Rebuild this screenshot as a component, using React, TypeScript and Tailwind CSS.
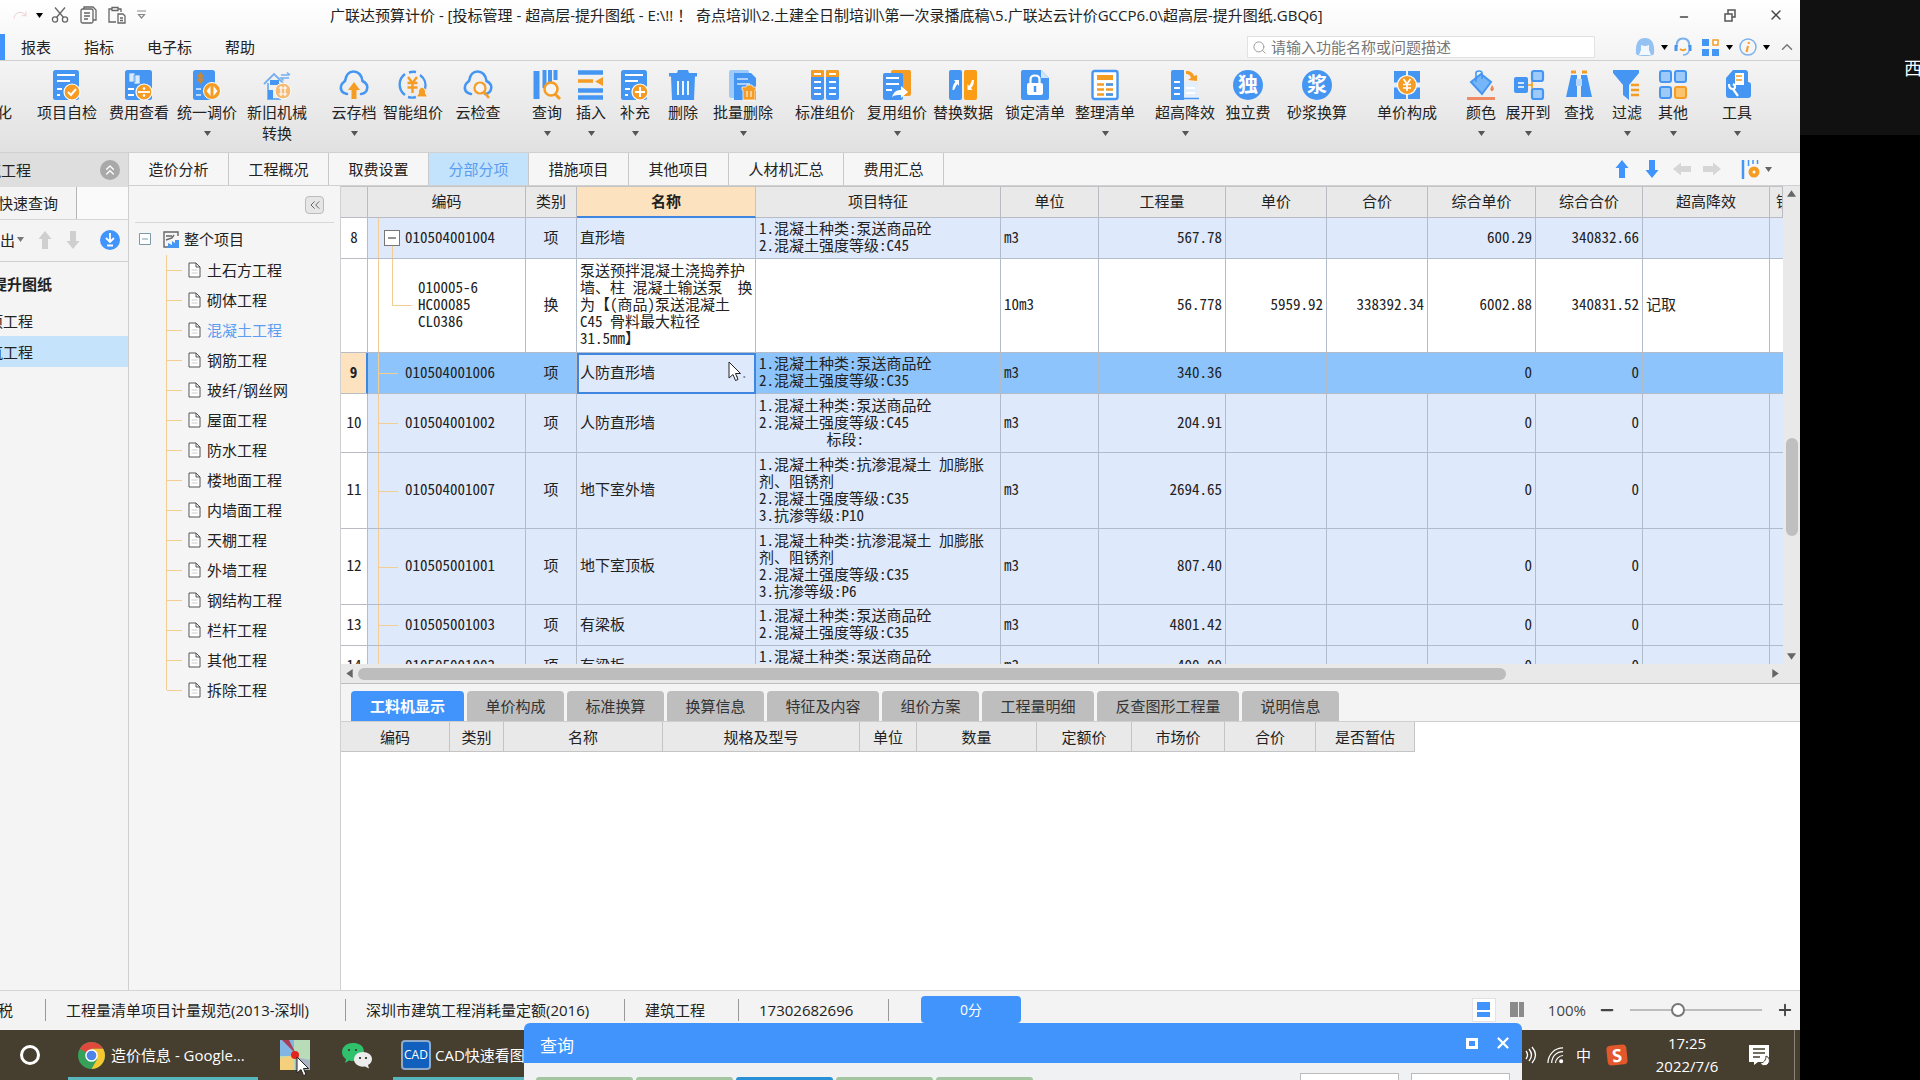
import React from 'react';
import {
  Redo,
  Search,
  ChevronUp,
  ChevronsUp,
  ChevronsLeft,
  X,
  Minus,
  Plus,
} from 'lucide-react';

const BLUE = '#4596f3';
const LIGHT = '#9ccbfa';
const ORANGE = '#f59c24';

type IconMap = Record<string, React.ReactNode>;

const badge = <circle cx="19" cy="22" r="8" fill={ORANGE} stroke="#fff" strokeWidth="1.2" />;
const doc = (
  <>
    <rect x="0" y="0" width="26" height="30" rx="2.5" fill={BLUE} />
    <path d="M4 5h18M4 11h13M4 19h5M4 25h3" stroke="#fff" strokeWidth="1.8" />
  </>
);
const cloud = (
  <path
    d="M7 24C2 23 0 20 1 16c.6-3 3-4 4-5C6 5 9 1.500 13.500 1.500S22 5 22.500 11c3 1.500 5 3 4.800 6.500C27 21 25 23.500 21 24"
    fill="none"
    stroke={BLUE}
    strokeWidth="2.600"
    strokeLinecap="round"
  />
);

const icons: IconMap = {
  check: (
    <>
      {doc}
      {badge}
      <path d="M15 22l3 3 5-6" fill="none" stroke="#fff" strokeWidth="2" />
    </>
  ),
  fee: (
    <>
      <rect width="27" height="30" rx="2.5" fill={BLUE} />
      <path d="M4 3h6v9H4zM9 5h6v9H9z" fill="#d8ebff" stroke={BLUE} strokeWidth=".7" />
      <path d="M3 19h6M3 25h6" stroke="#fff" strokeWidth="2" />
      {badge}
      <path d="M13 22h12" stroke="#fff" strokeWidth="1.8" />
      <circle cx="19" cy="18.500" r="1.300" fill="#fff" />
      <circle cx="19" cy="25.500" r="1.300" fill="#fff" />
    </>
  ),
  adjust: (
    <>
      <rect width="22" height="30" rx="2.5" fill={BLUE} />
      <path d="M7.500 2l4 5h-2v2h2l-4 5-4-5h2V7h-2z" fill="#c88738" />
      <path d="M3 19h5M3 25h5" stroke="#b8dafc" strokeWidth="2" />
      <circle cx="19" cy="21" r="8.500" fill={ORANGE} stroke="#fff" />
      <path d="M17.500 16v10l-4-5zM20.500 16v10l4-5z" fill="#fff" />
    </>
  ),
  machine: (
    <>
      <path d="M1 14L11 4l10 10M5 13v16h12V13" fill="none" stroke="#74aff1" strokeWidth="1.800" />
      <path d="M7 10h9v5H7zM5 20h5v9H5z" fill={BLUE} />
      <path d="M18 5h8M24 2.500l3 2.500M26 8h-8l2.500 2.500" fill="none" stroke="#74aff1" strokeWidth="1.500" />
      <circle cx="20" cy="21" r="8" fill="#f4bc78" stroke="#fff" />
      <path d="M16 18h8M16 24h8M18 16v10M22 16v10" stroke="#fff" strokeWidth="1.200" />
    </>
  ),
  cloudUp: (
    <>
      {cloud}
      <path d="M14 12l6 8h-3.500v9h-5v-9H8z" fill={ORANGE} />
    </>
  ),
  smart: (
    <>
      <path d="M6 4A13 13 0 0 0 6 25M10 2.500a13 13 0 0 1 7-.5M21 5a13 13 0 0 1 5 14M9 27a13 13 0 0 0 8 0" fill="none" stroke={BLUE} strokeWidth="2.400" />
      <path d="M9 7l4.500 6L18 7M8.500 13h10M8.500 17.500h10M13.500 13v10" fill="none" stroke={ORANGE} strokeWidth="2.400" />
      <path d="M23 17c4 1.500 3.500 5 3.500 6.500L29 27H17l2.500-3.500c0-3 0-5 3.500-6.500z" fill={ORANGE} stroke="#f4f4f4" />
    </>
  ),
  cloudFind: (
    <>
      {cloud}
      <circle cx="16" cy="18" r="5.500" fill="#f4f4f4" stroke={ORANGE} strokeWidth="2.200" />
      <path d="M20 22l5 6" stroke={ORANGE} strokeWidth="2.600" />
    </>
  ),
  query: (
    <>
      <path d="M3.500 1v28" stroke={BLUE} strokeWidth="6" />
      <path d="M11.500 0v18M17 0v12M22.500 0v10" stroke={BLUE} strokeWidth="4" />
      <circle cx="18" cy="19" r="6.500" fill="#f4f4f4" stroke={ORANGE} strokeWidth="2.500" />
      <path d="M22 24l5 5" stroke={ORANGE} strokeWidth="3" />
    </>
  ),
  insert: (
    <>
      <path d="M1 2.500h25M1 20.500h25M1 27.500h25" stroke={BLUE} strokeWidth="4.500" />
      <path d="M1 11h15" stroke={ORANGE} strokeWidth="3.500" />
      <path d="M26 7v9l-8-4.500z" fill={ORANGE} />
    </>
  ),
  add: (
    <>
      {doc}
      {badge}
      <path d="M19 17v10M14 22h10" stroke="#fff" strokeWidth="2" />
    </>
  ),
  trash: (
    <>
      <path d="M0 3h8l1-3h10l1 3h8v3.500h-2L25 30H3L2 6.500H0z" fill={BLUE} />
      <path d="M9 11v14M14 11v14M19 11v14" stroke="#fff" strokeWidth="1.800" />
    </>
  ),
  batch: (
    <>
      <rect x="0" y="0" width="20" height="28" rx="2" fill={LIGHT} />
      <path d="M5 3h17l5 5v22H5z" fill={BLUE} />
      <path d="M8 9h11M8 14h13" stroke="#cfe5fd" strokeWidth="1.500" />
      <path d="M13 17h4l1-2h5l1 2h3v3h-1v10H14V20h-1z" fill={ORANGE} stroke="#fff" strokeWidth=".7" />
      <path d="M18 21v6M22 21v6" stroke="#fff" />
    </>
  ),
  standard: (
    <>
      <rect x="0" y="0" width="13" height="30" rx="2" fill={BLUE} />
      <rect x="15" y="0" width="13" height="30" rx="2" fill={BLUE} />
      <path d="M0 7V2q0-2 2-2h9q2 0 2 2v5zM15 7V2q0-2 2-2h9q2 0 2 2v5z" fill={ORANGE} />
      <path d="M3 4h7M18 4h7M3 12h7M18 12h7M3 18h7M18 18h7M3 24h7M18 24h7" stroke="#fff" strokeWidth="1.800" />
    </>
  ),
  reuse: (
    <>
      <rect x="8" y="0" width="20" height="26" rx="2" fill={ORANGE} />
      <rect x="0" y="3" width="20" height="27" rx="2" fill={BLUE} />
      <path d="M3 8h13M3 14h13M3 20h6" stroke="#fff" strokeWidth="1.800" />
      <path d="M9 27c2-6 5-7 9-7v-4l7 6-7 6v-3c-4 0-6 0-9 2z" fill="#fff" />
    </>
  ),
  replace: (
    <>
      <rect x="0" y="0" width="13" height="30" rx="2" fill={BLUE} />
      <rect x="15" y="0" width="13" height="30" rx="2" fill="#fb9c17" />
      <path d="M3.500 20c0-4 1-6 3-8L5 10h5v6l-1.500-2c-2 2-2 4-3.500 6zM25 10c0 4-1 6-3 8l1.500 2h-5v-6l1.500 2c2-2 2-4 3-6z" fill="#fff" />
    </>
  ),
  lock: (
    <>
      <path d="M2 0h18l8 8v20q0 2-2 2H2q-2 0-2-2V2q0-2 2-2z" fill={BLUE} />
      <path d="M20 0l8 8h-8z" fill="#cfe5fd" />
      <rect x="6" y="13" width="16" height="12" rx="2" fill="#fff" />
      <path d="M9.500 13V9.500q0-4 4.500-4t4.500 4V13" fill="none" stroke="#fff" strokeWidth="2.200" />
      <path d="M14 16v6" stroke={BLUE} strokeWidth="2.500" />
    </>
  ),
  tidy: (
    <>
      <rect x="1.500" y="1" width="25" height="28" rx="2" fill="#fff" stroke={BLUE} strokeWidth="2.400" />
      <path d="M6 5h16v5H6z" fill={ORANGE} />
      <path d="M6 14.500h7M15 14.500h7M6 19.500h7M15 19.500h7M6 24.500h7M15 24.500h7" stroke={ORANGE} strokeWidth="2.600" />
      <path d="M15 14.500h7M15 24.500h7" stroke={BLUE} strokeWidth="2.600" />
    </>
  ),
  high: (
    <>
      <path d="M0 30V2q0-2 2-2h11v30z" fill={BLUE} />
      <path d="M13 12h14v18H13z" fill="#e3effc" />
      <path d="M3 12h6M3 18h6M3 24h6" stroke="#fff" strokeWidth="2" />
      <path d="M15 18h9M15 23h9" stroke="#fff" strokeWidth="2" />
      <path d="M0 28.500h28" stroke={BLUE} strokeWidth="1.500" />
      <path d="M15 1c5 0 7 2 8 5l3-1v6l-9-1 3-2c-1-3-2-4-5-4z" fill={ORANGE} />
    </>
  ),
  price: (
    <>
      <path d="M1 1h12v28H1zM15 1h12v28H15z" fill={BLUE} />
      <path d="M1 12.500h26v5H1z" fill="#e6eef8" />
      <circle cx="14" cy="15" r="9.500" fill={ORANGE} stroke="#fff" strokeWidth="1.200" />
      <path d="M10.500 9l3.500 5 3.500-5M10 14.500h8M10 18h8M14 14v7" fill="none" stroke="#fff" strokeWidth="1.700" />
    </>
  ),
  color: (
    <>
      <path d="M4 12L14 4l10 8-9 12z" fill="#75b5f8" stroke={BLUE} strokeWidth="2" />
      <path d="M9 12V3q0-2 3-2t3 2v6" fill="none" stroke={BLUE} strokeWidth="1.600" />
      <path d="M25 15c2 3 2.500 4 1 5.500s-3 0-2.500-2z" fill="#ec8552" />
      <path d="M0 28.500h28" stroke="#ee8a64" strokeWidth="3" />
    </>
  ),
  expand: (
    <>
      <path d="M13 15h6M18 6v19M18 6h4M18 25h4" stroke={ORANGE} strokeWidth="1.600" fill="none" />
      <rect x="0" y="7" width="14" height="16" rx="2" fill={BLUE} />
      <path d="M4 13h6M4 17h6" stroke="#fff" strokeWidth="1.400" />
      <rect x="18" y="1" width="11" height="10" rx="2" fill="#9dcaf9" stroke={BLUE} strokeWidth="2.200" />
      <rect x="18" y="19" width="11" height="10" rx="2" fill="#9dcaf9" stroke={BLUE} strokeWidth="2.200" />
    </>
  ),
  find: (
    <>
      <path d="M6 2h5M17 2h5" stroke={ORANGE} strokeWidth="3" />
      <path d="M6 5h6v22H1zM16 5h6l5 22H16z" fill={BLUE} />
      <path d="M11 9h6v7h-6z" fill="#b9d9fb" />
    </>
  ),
  filter: (
    <>
      <path d="M0 0h26v3L16 15v15l-6-5V15L0 3z" fill={BLUE} />
      <path d="M18 15h8M18 20h8M18 25h8" stroke={ORANGE} strokeWidth="2.400" />
    </>
  ),
  other: (
    <>
      <rect x="1" y="1" width="11" height="11" rx="2" fill="#9dcaf9" stroke={BLUE} strokeWidth="2" />
      <rect x="16" y="1" width="11" height="11" rx="2" fill="#9dcaf9" stroke={BLUE} strokeWidth="2" />
      <rect x="1" y="17" width="11" height="11" rx="2" fill="#9dcaf9" stroke={BLUE} strokeWidth="2" />
      <rect x="16" y="17" width="11" height="11" rx="2" fill="#fcc36d" stroke={ORANGE} strokeWidth="2" />
    </>
  ),
  tools: (
    <>
      <path d="M3 8l7-8h12q3 0 3 3v9q3 0 3 3v10q0 3-3 3H6q-3 0-3-3z" fill={BLUE} />
      <path d="M12 3h9v12h-9z" fill="#fff" />
      <path d="M13 6h6M13 10h6" stroke={ORANGE} strokeWidth="1.500" />
      <path d="M6 14c0 4 2 5 4 5l5 7M10 14c2 1 3 3 1 5" fill="none" stroke="#fff" strokeWidth="2.200" />
    </>
  ),
};

interface RibbonItem {
  label: string;
  icon: string;
  gap: string;
  menu?: boolean;
}

const ribbon: RibbonItem[] = [
  { label: '项目自检', icon: 'check', gap: 'ml-6' },
  { label: '费用查看', icon: 'fee', gap: 'ml-2.5' },
  { label: '统一调价', icon: 'adjust', gap: 'ml-1.5', menu: true },
  { label: '新旧机械转换', icon: 'machine', gap: 'ml-2' },
  { label: '云存档', icon: 'cloudUp', gap: 'ml-5.5', menu: true },
  { label: '智能组价', icon: 'smart', gap: 'ml-1' },
  { label: '云检查', icon: 'cloudFind', gap: 'ml-2.5' },
  { label: '查询', icon: 'query', gap: 'ml-6.5', menu: true },
  { label: '插入', icon: 'insert', gap: 'ml-1.5', menu: true },
  { label: '补充', icon: 'add', gap: 'ml-1.5', menu: true },
  { label: '删除', icon: 'trash', gap: 'ml-2.5' },
  { label: '批量删除', icon: 'batch', gap: 'ml-2.5', menu: true },
  { label: '标准组价', icon: 'standard', gap: 'ml-5' },
  { label: '复用组价', icon: 'reuse', gap: 'ml-2.5', menu: true },
  { label: '替换数据', icon: 'replace', gap: 'ml-1' },
  { label: '锁定清单', icon: 'lock', gap: 'ml-2.5' },
  { label: '整理清单', icon: 'tidy', gap: 'ml-2', menu: true },
  { label: '超高降效', icon: 'high', gap: 'ml-4.5', menu: true },
  { label: '独立费', icon: '独', gap: 'ml-2' },
  { label: '砂浆换算', icon: '浆', gap: 'ml-3.5' },
  { label: '单价构成', icon: 'price', gap: 'ml-7' },
  { label: '颜色', icon: 'color', gap: 'ml-6', menu: true },
  { label: '展开到', icon: 'expand', gap: 'ml-1', menu: true },
  { label: '查找', icon: 'find', gap: 'ml-2' },
  { label: '过滤', icon: 'filter', gap: 'ml-2.5', menu: true },
  { label: '其他', icon: 'other', gap: 'ml-2', menu: true },
  { label: '工具', icon: 'tools', gap: 'ml-6.5', menu: true },
];

const mainTabs = ['造价分析', '工程概况', '取费设置', '分部分项', '措施项目', '其他项目', '人材机汇总', '费用汇总'];

const treeItems = [
  '土石方工程', '砌体工程', '混凝土工程', '钢筋工程', '玻纤/钢丝网', '屋面工程', '防水工程', '楼地面工程',
  '内墙面工程', '天棚工程', '外墙工程', '钢结构工程', '栏杆工程', '其他工程', '拆除工程',
];

const columns = [
  { name: '', width: 'w-[27px]' },
  { name: '编码', width: 'w-[158px]' },
  { name: '类别', width: 'w-[51px]' },
  { name: '名称', width: 'w-[179px]' },
  { name: '项目特征', width: 'w-[245px]' },
  { name: '单位', width: 'w-[98px]' },
  { name: '工程量', width: 'w-[127px]' },
  { name: '单价', width: 'w-[101px]' },
  { name: '合价', width: 'w-[101px]' },
  { name: '综合单价', width: 'w-[108px]' },
  { name: '综合合价', width: 'w-[107px]' },
  { name: '超高降效', width: 'w-[127px]' },
  { name: '锁', width: 'w-auto' },
];

interface Row {
  no: string;
  code: string;
  kind: string;
  name: string;
  feature: string;
  unit: string;
  qty: string;
  price?: string;
  total?: string;
  allPrice: string;
  allTotal: string;
  high?: string;
  height: string;
  type?: 'parent' | 'child' | 'selected';
}

const rows: Row[] = [
  { no: '8', code: '010504001004', kind: '项', name: '直形墙', feature: '1.混凝土种类:泵送商品砼\n2.混凝土强度等级:C45', unit: 'm3', qty: '567.78', allPrice: '600.29', allTotal: '340832.66', height: 'h-[41px]', type: 'parent' },
  { no: '', code: '010005-6\nHC00085\nCL0386', kind: '换', name: '泵送预拌混凝土浇捣养护\n墙、柱 混凝土输送泵  换\n为【(商品)泵送混凝土\nC45 骨料最大粒径\n31.5mm】', feature: '', unit: '10m3', qty: '56.778', price: '5959.92', total: '338392.34', allPrice: '6002.88', allTotal: '340831.52', high: '记取', height: 'h-[94px]', type: 'child' },
  { no: '9', code: '010504001006', kind: '项', name: '人防直形墙', feature: '1.混凝土种类:泵送商品砼\n2.混凝土强度等级:C35', unit: 'm3', qty: '340.36', allPrice: '0', allTotal: '0', height: 'h-[41px]', type: 'selected' },
  { no: '10', code: '010504001002', kind: '项', name: '人防直形墙', feature: '1.混凝土种类:泵送商品砼\n2.混凝土强度等级:C45\n         标段:', unit: 'm3', qty: '204.91', allPrice: '0', allTotal: '0', height: 'h-[59px]' },
  { no: '11', code: '010504001007', kind: '项', name: '地下室外墙', feature: '1.混凝土种类:抗渗混凝土 加膨胀\n剂、阻锈剂\n2.混凝土强度等级:C35\n3.抗渗等级:P10', unit: 'm3', qty: '2694.65', allPrice: '0', allTotal: '0', height: 'h-[76px]' },
  { no: '12', code: '010505001001', kind: '项', name: '地下室顶板', feature: '1.混凝土种类:抗渗混凝土 加膨胀\n剂、阻锈剂\n2.混凝土强度等级:C35\n3.抗渗等级:P6', unit: 'm3', qty: '807.40', allPrice: '0', allTotal: '0', height: 'h-[76px]' },
  { no: '13', code: '010505001003', kind: '项', name: '有梁板', feature: '1.混凝土种类:泵送商品砼\n2.混凝土强度等级:C35', unit: 'm3', qty: '4801.42', allPrice: '0', allTotal: '0', height: 'h-[41px]' },
  { no: '14', code: '010505001003', kind: '项', name: '有梁板', feature: '1.混凝土种类:泵送商品砼\n2.混凝土强度等级:C35', unit: 'm3', qty: '400.00', allPrice: '0', allTotal: '0', height: 'h-[41px]' },
];

const detailTabs = [
  { name: '工料机显示', width: 'w-[113px]' },
  { name: '单价构成', width: 'w-[97px]' },
  { name: '标准换算', width: 'w-[97px]' },
  { name: '换算信息', width: 'w-[97px]' },
  { name: '特征及内容', width: 'w-[112px]' },
  { name: '组价方案', width: 'w-[97px]' },
  { name: '工程量明细', width: 'w-[112px]' },
  { name: '反查图形工程量', width: 'w-[142px]' },
  { name: '说明信息', width: 'w-[97px]' },
];

const detailColumns = [
  { name: '编码', width: 'w-[109px]' },
  { name: '类别', width: 'w-[54px]' },
  { name: '名称', width: 'w-[159px]' },
  { name: '规格及型号', width: 'w-[197px]' },
  { name: '单位', width: 'w-[57px]' },
  { name: '数量', width: 'w-[120px]' },
  { name: '定额价', width: 'w-[95px]' },
  { name: '市场价', width: 'w-[93px]' },
  { name: '合价', width: 'w-[91px]' },
  { name: '是否暂估', width: 'w-[99px]' },
];

const Caret = ({ className = 'text-[#555]', size = 7 }: { className?: string; size?: number }) => (
  <svg width={size} height={size - 2} viewBox="0 0 7 5" className={`shrink-0 ${className}`} aria-hidden="true">
    <path d="M0 0h7L3.500 5z" fill="currentColor" />
  </svg>
);

const BlockArrow = ({ turn, color }: { turn: string; color: string }) => (
  <svg width="18" height="18" viewBox="0 0 18 18" className={turn} aria-hidden="true">
    <path d="M9 0l6.500 8H12v10H6V8H2.500z" fill={color} />
  </svg>
);

const Cursor = () => (
  <svg width="14" height="21" viewBox="0 0 14 21" aria-hidden="true">
    <path d="M1 1v16l4-3.500 2.500 6 2.500-1-2.500-6h5z" fill="#fff" stroke="#222" />
  </svg>
);

const TitleBar = () => (
  <header className="bg-gradient-to-b from-white to-[#f3f3f3]">
    <div className="flex h-[34px] items-center pb-1">
      <div className="flex w-[330px] items-center gap-2 text-[#666]">
        <Redo size={16} className="ml-3 text-[#eed3d0]" strokeWidth={1.5} />
        <Caret className="text-black" />
        <button aria-label="剪切">
          <svg width="18" height="16" viewBox="0 0 18 16" fill="none" stroke="#666" strokeWidth="1.300">
            <circle cx="4" cy="12.500" r="2.600" />
            <circle cx="14" cy="12.500" r="2.600" />
            <path d="M4 .5l8.500 10M14 .5l-8.500 10" />
          </svg>
        </button>
        <button aria-label="复制" className="ml-0.5">
          <svg width="18" height="18" viewBox="0 0 18 18" fill="none" stroke="#666" strokeWidth="1.300">
            <path d="M5 3V1h9l3 3v10h-3" />
            <rect x="2" y="3" width="12" height="14" rx="1.500" />
            <path d="M5 7h6M5 10h6M5 13h4" />
          </svg>
        </button>
        <button aria-label="粘贴" className="ml-0.5">
          <svg width="20" height="18" viewBox="0 0 20 18" fill="none" stroke="#666" strokeWidth="1.300">
            <path d="M9 16H2V3h3M11 3h3v3M5 1.500h6v3H5z" />
            <path d="M11 8h5l2 2v7h-7zM13 12h3M13 14.500h3" />
          </svg>
        </button>
        <svg width="9" height="10" viewBox="0 0 9 10" className="ml-0.5" fill="none" stroke="#888" strokeWidth="1.200" aria-hidden="true">
          <path d="M0 1h9M1.500 4.500h6L4.500 8z" />
        </svg>
      </div>
      <h1 className="min-w-0 flex-1 truncate whitespace-pre">
        {'广联达预算计价 - [投标管理 - 超高层-提升图纸 - E:\\!! ！ 奇点培训\\2.土建全日制培训\\第一次录播底稿\\5.广联达云计价GCCP6.0\\超高层-提升图纸.GBQ6]'}
      </h1>
      <div className="flex items-center gap-8 pr-4 text-[#444]">
        <button aria-label="最小化" className="pt-1"><Minus size={12} strokeWidth={3} /></button>
        <button aria-label="还原" className="ml-0.5">
          <svg width="12" height="13" viewBox="0 0 12 13" fill="none" stroke="#555" strokeWidth="1.500">
            <path d="M1 5h7v7H1zM4 5V1h7v7H8" />
          </svg>
        </button>
        <button aria-label="关闭"><X size={16} /></button>
      </div>
    </div>
    <div className="flex h-[26px] items-center">
      <span className="h-full w-[5px] shrink-0 bg-[#4094fc]"></span>
      <nav className="flex flex-1 gap-[33px] pl-4">
        {['报表', '指标', '电子标', '帮助'].map(m => (
          <a key={m} href="#">{m}</a>
        ))}
      </nav>
      <label className="flex h-[22px] w-[348px] items-center gap-1 border border-[#e2e2e2] bg-white px-1">
        <Search size={15} className="shrink-0 text-[#999]" strokeWidth={1.5} />
        <input
          type="text"
          aria-label="搜索"
          placeholder="请输入功能名称或问题描述"
          className="min-w-0 flex-1 bg-transparent outline-none placeholder:text-[#777]"
        />
      </label>
      <div className="ml-10 flex w-[165px] items-center gap-1.5">
        <svg width="20" height="20" viewBox="0 0 20 20" aria-hidden="true">
          <path d="M1 17C0 5 4 1 10 1s10 4 9 16q-2 2-9 2t-9-2z" fill="#94c2f2" />
          <path d="M6 8q4 2 8 0v5l2 5H4l2-5z" fill="#f3f8fe" />
        </svg>
        <Caret className="text-black" />
        <svg width="18" height="20" viewBox="0 0 18 20" fill="none" aria-hidden="true">
          <path d="M3 10C2 4 5 1.500 9 1.500S16 4 15 10" stroke="#7db1ec" strokeWidth="2" />
          <path d="M2 8v6M16 8v6" stroke={BLUE} strokeWidth="3" />
          <path d="M15 14c-1 3-3 4-6 4" stroke="#7db1ec" strokeWidth="1.500" />
          <path d="M6 12q3 2.500 6 0" stroke={ORANGE} strokeWidth="1.800" />
        </svg>
        <svg width="18" height="18" viewBox="0 0 18 18" className="ml-1" aria-hidden="true">
          <path d="M0 1h7v7H0zM0 11h7v7H0zM10 11h7v7h-7z" fill={BLUE} />
          <path d="M11 2h5v5h-5z" fill="#fff" stroke={ORANGE} strokeWidth="1.500" />
        </svg>
        <Caret className="text-black" />
        <svg width="18" height="18" viewBox="0 0 18 18" fill="none" aria-hidden="true">
          <circle cx="9" cy="9" r="8" stroke="#7db1ec" strokeWidth="1.500" />
          <path d="M10 4l-.5 2M9 8l-1.500 6" stroke={ORANGE} strokeWidth="2" />
        </svg>
        <Caret className="text-black" />
        <ChevronUp size={18} className="ml-0.5 shrink-0 text-[#777]" />
      </div>
    </div>
  </header>
);

const Ribbon = () => (
  <div className="flex h-[93px] shrink-0 items-start overflow-hidden border-y border-[#d0d0d0] bg-gradient-to-b from-[#f4f4f4] to-[#e1e1e1] pt-[9px]">
    <div className="mt-[32px] flex w-3 shrink-0 justify-end leading-[21px]">化</div>
    {ribbon.map(item => {
      const len = item.label.length;
      const width = len === 2 ? 'w-[38px]' : len === 3 ? 'w-12' : 'w-[62px]';
      return (
        <button key={item.label} className={`flex shrink-0 flex-col items-center ${item.gap} ${width}`}>
          {item.icon.length === 1 ? (
            <span className="flex h-[30px] w-[30px] items-center justify-center rounded-full bg-[#4596f3] text-[20px] font-bold text-white">
              {item.icon}
            </span>
          ) : (
            <svg width="28" height="30" viewBox="0 0 28 30" className="overflow-visible" aria-hidden="true">{icons[item.icon]}</svg>
          )}
          <span className="mt-0.5 leading-[21px]">{item.label}</span>
          {item.menu && <Caret className="mt-2 text-[#555]" />}
        </button>
      );
    })}
  </div>
);

const ProjectPanel = () => (
  <aside className="flex w-[129px] shrink-0 flex-col overflow-hidden border-r border-[#cfcfcf] bg-[#f4f4f4]">
    <div className="flex h-[34px] items-center justify-between bg-[#dedede] pr-2">
      <span className="-ml-3.5">筑工程</span>
      <button aria-label="折叠" className="flex h-5 w-5 items-center justify-center rounded-full bg-[#a9a9a9] text-white">
        <ChevronsUp size={16} />
      </button>
    </div>
    <div className="flex h-[33px] border-b border-[#d5d5d5]">
      <button className="flex w-[77px] items-center border-r border-[#b5b5b5] bg-[#f4f4f4]"><span className="-ml-0.5">快速查询</span></button>
      <span className="flex-1 bg-[#fafafa]"></span>
    </div>
    <div className="flex h-[42px] items-center border-b border-[#cfcfcf] pr-2 pb-0.5">
      <span>出</span>
      <Caret className="ml-0.5 text-[#777]" />
      <span className="ml-3 flex gap-2.5">
        <BlockArrow turn="" color="#cfcfcf" />
        <BlockArrow turn="rotate-180" color="#cfcfcf" />
      </span>
      <button aria-label="下载" className="ml-auto flex h-5 w-5 items-center justify-center rounded-full bg-[#4094fc]">
        <svg width="12" height="14" viewBox="0 0 12 14" fill="none" stroke="#fff" strokeWidth="1.800">
          <path d="M6 0v9M2 5l4 4 4-4M3 12.500h6" />
        </svg>
      </button>
    </div>
    <ul className="pt-1.5">
      <li className="flex h-[31px] items-center font-bold"><span className="-ml-2">提升图纸</span></li>
      <li className="mt-1.5 flex h-[31px] items-center"><span className="-ml-3">项工程</span></li>
      <li className="flex h-[31px] items-center bg-[#c5e3fb]"><span className="-ml-3">筑工程</span></li>
    </ul>
  </aside>
);

const TreePanel = () => (
  <aside className="w-[212px] shrink-0 border-r border-[#d0d0d0] bg-[#f5f5f5]">
    <div className="mx-1.5 flex h-[37px] items-start justify-end border-b border-[#d8d8d8] pt-2.5 pr-2.5">
      <button aria-label="收起" className="flex h-[18px] w-[19px] items-center justify-center rounded-sm border border-[#bbb] bg-[#e6e6e6] text-[#666]">
        <ChevronsLeft size={16} strokeWidth={1.5} />
      </button>
    </div>
    <div className="flex h-8 items-center pl-2.5">
      <svg width="12" height="12" viewBox="0 0 12 12" fill="#fff" stroke="#7d9aa8" aria-hidden="true">
        <path d="M.5.5h11v11H.5zM3 6h6" />
      </svg>
      <svg width="17" height="17" viewBox="0 0 17 17" className="ml-3 mr-1" fill="none" aria-hidden="true">
        <path d="M15 5V1H1v15h7M3 5h6M3 9l6-2 2-3" stroke="#666" strokeWidth="1.400" />
        <path d="M5 17v-5l4 2v-4l3 2v-3h4v8z" fill={BLUE} />
      </svg>
      整个项目
    </div>
    <ul className="pl-[37px]">
      {treeItems.map((item, i) => (
        <li key={item} className="flex h-[30px] items-center">
          <span className={`self-start border-l border-[#f3cd92] ${i === treeItems.length - 1 ? 'h-[15px]' : 'h-full'}`}></span>
          <span className="w-[15px] border-t border-[#f3cd92]"></span>
          <svg width="13" height="16" viewBox="0 0 13 16" className="mx-1.5 shrink-0" fill="#fff" stroke="#555" aria-hidden="true">
            <path d="M1 1h7l4 4v10H1zM8 1v4h4" />
            <path d="M3.500 8h6M3.500 11h6" stroke="#ccc" />
          </svg>
          <a href="#" className={item === '混凝土工程' ? 'text-[#5b9df0]' : ''}>{item}</a>
        </li>
      ))}
    </ul>
  </aside>
);

const CodeCell = ({ row }: { row: Row }) => {
  if (row.type === 'child') {
    return (
      <>
        <span className="absolute inset-y-0 left-2.5 border-l border-[#f3cd92]"></span>
        <span className="absolute top-0 left-6 h-1/2 w-5 border-b border-l border-[#f3cd92]"></span>
        <span className="block pl-[50px]">{row.code}</span>
      </>
    );
  }
  return (
    <>
      <span className="absolute inset-y-0 left-2.5 border-l border-[#f3cd92]"></span>
      {row.type === 'parent' ? (
        <>
          <span className="absolute bottom-0 left-6 h-3 border-l border-[#f3cd92]"></span>
          <button aria-label="折叠" className="absolute top-3 left-4 flex h-4 w-4 items-center justify-center border border-[#777] bg-white">
            <Minus size={12} />
          </button>
        </>
      ) : (
        <span className="absolute top-1/2 left-2.5 w-5 border-t border-[#f3cd92]"></span>
      )}
      <span className="block pl-[37px]">{row.code}</span>
    </>
  );
};

const BillTable = () => (
  <table className="w-full table-fixed border-separate border-spacing-0">
    <colgroup>
      {columns.map(c => <col key={c.name} className={c.width} />)}
    </colgroup>
    <thead>
      <tr className="h-[31px]">
        {columns.map(c => (
          <th
            key={c.name}
            className={`overflow-hidden border-r px-0 pt-0 pb-0.5 whitespace-nowrap ${
              c.name === '名称'
                ? 'border-b-2 border-r-[#c4c4c4] border-b-[#3f86e0] bg-[#fde2c0] font-bold'
                : 'border-b border-[#b9bcc2] bg-[#e9e9e9] font-normal'
            } ${c.name === '锁' ? 'pl-1.5 text-left' : ''}`}
          >
            {c.name}
          </th>
        ))}
      </tr>
    </thead>
    <tbody className="leading-[17px] whitespace-pre [font-feature-settings:'hwid']">
      {rows.map((row, i) => {
        const selected = row.type === 'selected';
        const bg = selected ? 'bg-[#8dc4fb]' : row.type === 'child' ? 'bg-white' : 'bg-[#dfe9fc]';
        const cell = `border-r border-b border-[#b3bccb] px-[3px] pt-0 pb-1 overflow-hidden ${bg}`;
        return (
          <tr key={i} className={row.height}>
            <td className={`border-r border-b border-[#b9bcc2] px-0 pt-0 pb-1 text-center ${selected ? 'border-r-2 border-r-[#3f86e0] bg-[#fde2c0] font-bold' : 'bg-white'}`}>
              {row.no}
            </td>
            <td className={`relative border-r border-b border-[#b3bccb] px-0 pt-0 pb-1 ${bg}`}><CodeCell row={row} /></td>
            <td className={`${cell} text-center`}>{row.kind}</td>
            {selected ? (
              <td className="relative border-2 border-[#3f86e0] bg-[#dfe9fc] px-px pt-0 pb-1">
                {row.name}
                <span className="absolute top-2 right-1.5 text-[#888]">..</span>
                <span className="absolute top-1.5 right-3"><Cursor /></span>
              </td>
            ) : (
              <td className={cell}>{row.name}</td>
            )}
            <td className={cell}>{row.feature}</td>
            <td className={cell}>{row.unit}</td>
            <td className={`${cell} text-right`}>{row.qty}</td>
            <td className={`${cell} text-right`}>{row.price}</td>
            <td className={`${cell} text-right`}>{row.total}</td>
            <td className={`${cell} text-right`}>{row.allPrice}</td>
            <td className={`${cell} text-right`}>{row.allTotal}</td>
            <td className={cell}>{row.high}</td>
            <td className={`border-b border-[#b3bccb] ${bg}`}></td>
          </tr>
        );
      })}
    </tbody>
  </table>
);

const BillPane = () => (
  <section className="flex min-h-0 flex-[498_1_0%] flex-col">
    <div className="flex min-h-0 flex-1">
      <div className="min-w-0 flex-1 overflow-hidden border-t border-[#c4c4c4]">
        <BillTable />
      </div>
      <div className="flex w-[17px] shrink-0 flex-col items-center bg-[#e9e9e9] py-1">
        <Caret size={9} className="rotate-180 text-[#666]" />
        <div className="flex-[238]"></div>
        <div className="w-3 flex-[97] rounded-full bg-[#bfbfbf]"></div>
        <div className="flex-[116]"></div>
        <Caret size={9} className="text-[#666]" />
      </div>
    </div>
    <div className="flex h-5 shrink-0 items-center border-b border-[#bdbdbd] bg-[#e9e9e9] pr-5 pl-1">
      <Caret size={9} className="rotate-90 text-[#666]" />
      <div className="ml-1 h-3 flex-[1149] rounded-full bg-[#bdbdbd]"></div>
      <div className="flex-[265]"></div>
      <Caret size={9} className="-rotate-90 text-[#666]" />
    </div>
  </section>
);

const DetailPane = () => (
  <section className="flex min-h-0 flex-[306_1_0%] flex-col overflow-hidden bg-white">
    <div className="flex h-[38px] shrink-0 items-end gap-[3px] border-b border-[#cfcfcf] bg-[#f4f4f4] pl-2.5">
      {detailTabs.map((t, i) => (
        <button
          key={t.name}
          className={`h-[30px] rounded-t-sm ${t.width} ${i === 0 ? 'bg-[#4094fc] font-bold text-white' : 'bg-[#bebebe] text-[#333]'}`}
        >
          {t.name}
        </button>
      ))}
    </div>
    <table className="table-fixed self-start border-separate border-spacing-0">
      <thead>
        <tr className="h-[30px]">
          {detailColumns.map(c => (
            <th key={c.name} className={`border-r border-b border-[#c4c4c4] bg-[#e9e9e9] p-0 font-normal ${c.width}`}>{c.name}</th>
          ))}
        </tr>
      </thead>
    </table>
  </section>
);

const Sep = () => <span className="h-[22px] border-l border-[#999]"></span>;

const StatusBar = () => (
  <footer className="flex h-10 shrink-0 items-center border-t border-[#d5d5d5] bg-[#f3f3f3] pb-0.5 whitespace-nowrap">
    <span className="w-[45px]"><span className="-ml-0.5">税</span></span>
    <Sep />
    <span className="w-[299px] pl-5">工程量清单项目计量规范(2013-深圳)</span>
    <Sep />
    <span className="w-[278px] pl-5">深圳市建筑工程消耗量定额(2016)</span>
    <Sep />
    <span className="w-[113px] pl-5">建筑工程</span>
    <Sep />
    <span className="w-[149px] pl-5">17302682696</span>
    <Sep />
    <button className="ml-8 h-[27px] w-[100px] rounded-sm bg-[#4094fc] text-[14px] text-white">0分</button>
    <div className="ml-auto flex items-center pr-1.5 text-[#444]">
      <button aria-label="上下布局" className="flex h-6 w-6 items-center justify-center border border-[#e3e3e3] bg-white">
        <svg width="15" height="15" viewBox="0 0 15 15" fill="#4094fc"><path d="M1 0h13v8H1zM1 10h13v5H1z" /></svg>
      </button>
      <button aria-label="左右布局" className="ml-3.5">
        <svg width="14" height="15" viewBox="0 0 14 15" fill="#8b8b8b"><path d="M0 0h8v15H0zM9 0h5v15H9z" /></svg>
      </button>
      <span className="ml-6">100%</span>
      <Minus size={18} strokeWidth={3} className="ml-3" />
      <input
        type="range"
        aria-label="缩放"
        min="0"
        max="100"
        defaultValue="35"
        className="mx-3.5 h-4 w-[132px] appearance-none bg-transparent [&::-webkit-slider-runnable-track]:h-0.5 [&::-webkit-slider-runnable-track]:bg-[#bdbdbd] [&::-webkit-slider-thumb]:-mt-1.5 [&::-webkit-slider-thumb]:h-3.5 [&::-webkit-slider-thumb]:w-3.5 [&::-webkit-slider-thumb]:appearance-none [&::-webkit-slider-thumb]:rounded-full [&::-webkit-slider-thumb]:border-2 [&::-webkit-slider-thumb]:border-[#777] [&::-webkit-slider-thumb]:bg-white"
      />
      <Plus size={18} strokeWidth={2.5} />
    </div>
  </footer>
);

const Taskbar = () => (
  <div className="flex h-[50px] shrink-0 items-center bg-[#463e2f] text-white">
    <button aria-label="Cortana" className="ml-5 h-5 w-5 rounded-full border-[3px] border-white"></button>
    <button className="ml-7 flex h-full w-[190px] items-center gap-1.5 border-b-[3px] border-[#58b7bd] pt-[3px] pl-2.5">
      <svg width="27" height="27" viewBox="0 0 28 28" aria-hidden="true">
        <circle cx="14" cy="14" r="14" fill="#37a05a" />
        <path d="M14 14L1.900 7A14 14 0 0 1 26.100 7H14z" fill="#df4a3c" />
        <path d="M14 7h12.100A14 14 0 0 1 14 28l6-10.500z" fill="#f5c832" />
        <circle cx="14" cy="14" r="6.500" fill="#fff" />
        <circle cx="14" cy="14" r="5" fill="#4c84ea" />
      </svg>
      造价信息 - Google...
    </button>
    <button aria-label="图片" className="relative ml-5.5 h-[30px] w-[30px]">
      <svg width="30" height="30" viewBox="0 0 30 30">
        <path d="M0 0h30v30H0z" fill="#b9dcb8" />
        <path d="M0 0h14v16H0z" fill="#82b4e4" />
        <path d="M0 18l14-3v15H0z" fill="#f4cf7c" />
        <path d="M15 17l15 3v10H15z" fill="#a8b4c4" />
        <path d="M2 0h7l7 14z" fill="#a93c56" />
        <circle cx="15" cy="15" r="4" fill="#e2261e" />
      </svg>
      <span className="absolute top-4 left-4"><Cursor /></span>
    </button>
    <button aria-label="微信" className="ml-8">
      <svg width="31" height="27" viewBox="0 0 31 27">
        <path d="M10.500 1C4.500 1 0 5 0 10c0 3 1.500 5.500 4 7l-1 4 4-2.500c8 2 15-2 15-8.500S17 1 10.500 1z" fill="#2fc16b" />
        <path d="M21 10c-5.500 0-9 3.500-9 7.500s4.500 8 11 7l4 2-1-3.500c3-1.500 4-4 4-6 0-4-4-7-9-7z" fill="#ececec" />
        <path d="M6 7h2v2H6zM13 7h2v2h-2zM17 15h2v2h-2zM23 15h2v2h-2z" fill="#3f4b3c" />
      </svg>
    </button>
    <button className="ml-5 flex h-full w-[190px] items-center gap-1 border-b-[3px] border-[#58b7bd] pt-[3px] pl-2">
      <span className="flex h-[30px] w-[30px] items-center justify-center rounded-sm border-2 border-[#8fa9c8] bg-[#1160bd] text-[12px]">CAD</span>
      CAD快速看图
    </button>
    <div className="ml-auto flex h-full items-center">
      <svg width="12" height="20" viewBox="0 0 12 20" fill="none" stroke="#fff" strokeWidth="1.300" aria-hidden="true">
        <path d="M1 6q3 4 0 8M4 4q5 6 0 12M7 2q7 8 0 16" />
      </svg>
      <svg width="17" height="17" viewBox="0 0 18 18" fill="none" stroke="#fff" strokeWidth="1.300" className="ml-2.5" aria-hidden="true">
        <path d="M1 17C1 8 8 1 17 1M5 17C5 10 10 5 17 5M9 17c0-4 4-8 8-8" />
        <circle cx="15" cy="15" r="1.500" fill="#fff" />
      </svg>
      <span className="ml-3">中</span>
      <span className="ml-4 flex h-5 w-5 -rotate-6 items-center justify-center rounded-sm bg-[#e2572b] text-[18px] font-bold">S</span>
      <div className="ml-5 w-20 text-center leading-[23px]">
        <div>17:25</div>
        <div>2022/7/6</div>
      </div>
      <svg width="21" height="22" viewBox="0 0 21 22" className="ml-5.5" aria-hidden="true">
        <path d="M0 1h20v17H9l-4 3v-3H0z" fill="#fff" />
        <path d="M4 5h12M4 9h12M4 13h7" stroke="#463e2f" strokeWidth="1.300" />
        <path d="M17 12a5 5 0 1 1-6 7c4 0 6-3 6-7z" fill="#fff" stroke="#463e2f" />
      </svg>
      <span className="ml-6 h-full w-[6px] border-l border-[#8a857b]"></span>
    </div>
  </div>
);

const QueryDialog = () => (
  <div role="dialog" aria-label="查询" className="absolute bottom-0 left-[524px] h-[57px] w-[998px] overflow-hidden rounded-t-md bg-[#f0f1f3]">
    <div className="flex h-10 items-center bg-[#4094fc] pr-2.5 pl-4 text-[17px] text-white">
      <span className="flex-1 pt-1.5">查询</span>
      <button aria-label="最大化" className="h-[11px] w-3 border-[3px] border-white"></button>
      <button aria-label="关闭" className="ml-4"><X size={18} strokeWidth={3} /></button>
    </div>
    <div className="flex h-[17px] items-end pr-3 pl-3">
      <div className="flex flex-1 gap-[3px]">
        {['bg-[#a3c6a0]', 'bg-[#a3c6a0]', 'bg-[#278fd6]', 'bg-[#a3c6a0]', 'bg-[#a3c6a0]'].map((c, i) => (
          <span key={i} className={`h-[3px] w-[97px] rounded-t-sm ${c}`}></span>
        ))}
      </div>
      <span className="h-[7px] w-[99px] border border-b-0 border-[#bbb] bg-white"></span>
      <span className="ml-3 h-[7px] w-[99px] border border-b-0 border-[#bbb] bg-white"></span>
    </div>
  </div>
);

export default function App() {
  return (
    <div className="flex h-screen overflow-hidden bg-black font-['Open_Sans','Noto_Sans_CJK_SC',sans-serif] text-[15px] leading-5 text-[#222]">
      <div className="relative flex min-w-0 flex-1 flex-col overflow-hidden bg-[#f4f4f4]">
        <TitleBar />
        <Ribbon />
        <main className="flex min-h-0 flex-1">
          <ProjectPanel />
          <div className="flex min-w-0 flex-1 flex-col">
            <div className="flex h-[33px] shrink-0 items-center border-b border-[#d0d0d0] bg-[#f6f6f6]">
              {mainTabs.map(t => (
                <button
                  key={t}
                  className={`h-full shrink-0 border-r border-[#c9c9c9] ${t.length === 5 ? 'w-[115px]' : 'w-[100px]'} ${
                    t === '分部分项' ? 'bg-[#c3e2fc] text-[#5b9df0]' : ''
                  }`}
                >
                  {t}
                </button>
              ))}
              <div className="ml-auto flex items-center gap-3 pr-7">
                <BlockArrow turn="" color="#4094fc" />
                <BlockArrow turn="rotate-180" color="#4094fc" />
                <BlockArrow turn="-rotate-90" color="#d6d6d6" />
                <BlockArrow turn="rotate-90" color="#d6d6d6" />
                <span className="ml-2 flex items-center gap-1">
                  <svg width="20" height="19" viewBox="0 0 20 19" aria-hidden="true">
                    <path d="M2 0v19" stroke={BLUE} strokeWidth="2.500" />
                    <path d="M7.500 0v6M12 0v4M16.500 0v4" stroke={BLUE} strokeWidth="1.500" />
                    <circle cx="13" cy="12" r="3.500" fill="#fff" stroke={ORANGE} strokeWidth="4" />
                  </svg>
                  <Caret className="text-[#666]" />
                </span>
              </div>
            </div>
            <div className="flex min-h-0 flex-1 font-['Noto_Sans_CJK_SC',sans-serif]">
              <TreePanel />
              <div className="flex min-w-0 flex-1 flex-col">
                <BillPane />
                <DetailPane />
              </div>
            </div>
          </div>
        </main>
        <StatusBar />
        <Taskbar />
        <QueryDialog />
      </div>
      <aside className="w-[120px] shrink-0">
        <div className="flex h-[135px] items-center justify-end overflow-hidden bg-[#111] text-[18px] text-white">
          <span className="-mr-0.5">西</span>
        </div>
      </aside>
    </div>
  );
}
